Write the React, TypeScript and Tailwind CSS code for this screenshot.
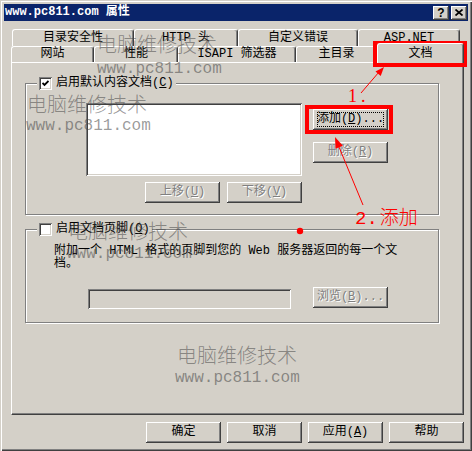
import React from "react";

// classic win32 bevels
const raised =
  "shadow-[inset_-1px_-1px_0_#404040,inset_1px_1px_0_#ffffff,inset_-2px_-2px_0_#808080,inset_2px_2px_0_#d4d0c8]";
const sunken =
  "shadow-[inset_1px_1px_0_#808080,inset_-1px_-1px_0_#ffffff,inset_2px_2px_0_#404040,inset_-2px_-2px_0_#d4d0c8]";
const grayed = "text-[#808080] [text-shadow:1px_1px_0_#ffffff]";

function Btn({
  label,
  disabled = false,
  focused = false,
}: {
  label: React.ReactNode;
  disabled?: boolean;
  focused?: boolean;
}) {
  return (
    <div
      className={`relative flex h-[21px] w-[75px] shrink-0 items-center justify-center bg-[#d4d0c8] ${raised}`}
    >
      {focused && (
        <div className="absolute inset-x-[4px] inset-y-[3px] border border-dotted border-black" />
      )}
      <span className={disabled ? grayed : "text-black"}>{label}</span>
    </div>
  );
}

function Check({ checked }: { checked: boolean }) {
  return (
    <div
      className={`flex h-[13px] w-[13px] shrink-0 items-center justify-center bg-white ${sunken}`}
    >
      {checked && (
        <svg width="7" height="7" viewBox="0 0 7 7">
          <path d="M0.5 3 L2.5 5 L6.5 1" fill="none" stroke="#000" strokeWidth="1.8" />
        </svg>
      )}
    </div>
  );
}

function Group({
  legend,
  checked,
  height,
  children,
}: {
  legend: React.ReactNode;
  checked: boolean;
  height: string;
  children: React.ReactNode;
}) {
  return (
    <div
      className={`w-[414px] ${height} border border-[#808080] shadow-[1px_1px_0_#ffffff,inset_1px_1px_0_#ffffff]`}
    >
      <div className="-mt-[7px] ml-[11px] flex w-fit items-center gap-[4px] bg-[#d4d0c8] px-[2px]">
        <Check checked={checked} />
        <span>{legend}</span>
      </div>
      {children}
    </div>
  );
}

function Tab({ label, w, selected = false }: { label: string; w: string; selected?: boolean }) {
  return (
    <div
      className={`flex ${w} shrink-0 items-center justify-center rounded-t-[3px] border-l border-t border-r border-l-white border-t-white border-r-[#404040] bg-[#d4d0c8] shadow-[inset_-1px_0_0_#808080] ${
        selected ? "relative z-10 -mt-[3px] h-[20px] pt-[1px]" : "h-full"
      }`}
    >
      {label}
    </div>
  );
}

const backTabs = [
  { label: "目录安全性", w: "w-[122px]" },
  { label: "HTTP 头", w: "w-[104px]" },
  { label: "自定义错误", w: "w-[120px]" },
  { label: "ASP.NET", w: "w-[102px]" },
];

const frontTabs = [
  { label: "网站", w: "w-[83px]" },
  { label: "性能", w: "w-[84px]" },
  { label: "ISAPI 筛选器", w: "w-[118px]" },
  { label: "主目录", w: "w-[81px]" },
];

const marks = [
  { cn: "left-[97px] top-[34px]", url: "left-[97px] top-[61px]" },
  { cn: "left-[27px] top-[94px]", url: "left-[26px] top-[118px]" },
  { cn: "left-[68px] top-[221px]", url: "left-[67px] top-[246px]" },
  { cn: "left-[177px] top-[345px]", url: "left-[175px] top-[370px]" },
];

export default function App() {
  return (
    <div className="relative h-[451px] w-[472px] overflow-hidden whitespace-nowrap bg-[#d4d0c8] px-[4px] pt-[4px] font-['Liberation_Mono','Noto_Sans_CJK_SC',monospace] text-[12px] leading-[13px] text-black shadow-[inset_1px_1px_0_#d4d0c8,inset_2px_2px_0_#ffffff,inset_-1px_-1px_0_#404040,inset_-2px_-2px_0_#808080]">
      {/* title bar */}
      <div className="flex h-[17px] items-center justify-between bg-[#0a246a] pl-[1px] pr-[1px]">
        <span className="font-bold text-white">www.pc811.com 属性</span>
        <div className="flex items-center gap-[2px]">
          <div className={`flex h-[14px] w-[16px] items-center justify-center bg-[#d4d0c8] ${raised}`}>
            <span className="font-['Liberation_Sans',sans-serif] text-[12px] font-bold leading-none">?</span>
          </div>
          <div className={`flex h-[14px] w-[16px] items-center justify-center bg-[#d4d0c8] ${raised}`}>
            <svg width="8" height="7" viewBox="0 0 8 7">
              <path d="M0.5 0.5 L7.5 6.5 M7.5 0.5 L0.5 6.5" stroke="#000" strokeWidth="1.7" />
            </svg>
          </div>
        </div>
      </div>

      <div className="pl-[7px] pr-[4px]">
        {/* tabs */}
        <div className="ml-[1px] mt-[8px] flex h-[17px]">
          {backTabs.map((t) => (
            <Tab key={t.label} label={t.label} w={t.w} />
          ))}
        </div>
        <div className="flex h-[16px] items-start">
          {frontTabs.map((t) => (
            <Tab key={t.label} label={t.label} w={t.w} />
          ))}
          <Tab label="文档" w="w-[87px]" selected />
        </div>

        {/* panel */}
        <div className="h-[353px] border border-l-white border-t-white border-r-[#404040] border-b-[#404040] pl-[13px] pt-[20px] shadow-[inset_-1px_-1px_0_#808080]">
          <Group legend={<>启用默认内容文档(<u>C</u>)</>} checked height="h-[132px]">
            <div className="ml-[60px] mt-[13px] flex">
              <div className="flex flex-col">
                <div className={`h-[73px] w-[216px] bg-white ${sunken}`} />
                <div className="mt-[6px] flex justify-end gap-[7px]">
                  <Btn label={<>上移(<u>U</u>)</>} disabled />
                  <Btn label={<>下移(<u>V</u>)</>} disabled />
                </div>
              </div>
              <div className="ml-[11px] mt-[6px] flex flex-col gap-[12px]">
                <Btn label={<>添加(<u>D</u>)...</>} focused />
                <Btn label={<>删除(<u>R</u>)</>} disabled />
              </div>
            </div>
          </Group>

          <div className="mt-[14px]">
            <Group legend={<>启用文档页脚(<u>O</u>)</>} checked={false} height="h-[94px]">
              <div className="ml-[28px] mt-[9px]">
                <div>附加一个 HTML 格式的页脚到您的 Web 服务器返回的每一个文</div>
                <div>档。</div>
              </div>
              <div className="mt-[16px] flex items-start">
                <div className={`ml-[62px] mt-[2px] h-[20px] w-[203px] bg-[#d4d0c8] ${sunken}`} />
                <div className="ml-[22px]">
                  <Btn label={<>浏览(<u>B</u>)...</>} disabled />
                </div>
              </div>
            </Group>
          </div>
        </div>

        {/* dialog buttons */}
        <div className="mt-[7px] flex justify-end gap-[6px]">
          <Btn label="确定" />
          <Btn label="取消" />
          <Btn label={<>应用(<u>A</u>)</>} />
          <Btn label="帮助" />
        </div>
      </div>

      {/* watermarks */}
      {marks.map((m, i) => (
        <React.Fragment key={i}>
          <div
            className={`pointer-events-none absolute ${m.cn} font-['Noto_Sans_CJK_SC',sans-serif] text-[20px] font-light leading-none text-[rgba(70,70,70,0.55)]`}
          >
            电脑维修技术
          </div>
          <div
            className={`pointer-events-none absolute ${m.url} font-['Liberation_Mono',monospace] text-[16px] leading-none text-[rgba(70,70,70,0.55)]`}
          >
            www.pc811.com
          </div>
        </React.Fragment>
      ))}

      {/* red annotations */}
      <svg className="pointer-events-none absolute left-0 top-0" width="472" height="451">
        <rect x="375" y="43" width="90" height="22" fill="none" stroke="#ff0000" strokeWidth="4" />
        <rect x="307" y="107" width="84" height="25" fill="none" stroke="#ff0000" strokeWidth="4" />
        <line x1="361" y1="93" x2="379" y2="72" stroke="#ff0000" strokeWidth="1" />
        <polygon points="384,67 380.7,76.1 375.5,71.5" fill="#ff0000" />
        <line x1="363" y1="205" x2="339" y2="147" stroke="#ff0000" strokeWidth="1" />
        <polygon points="335,137 342.9,145.7 335.5,148.7" fill="#ff0000" />
        <circle cx="300" cy="231" r="3.2" fill="#ff0000" />
      </svg>
      <div className="pointer-events-none absolute left-[348px] top-[87px] font-['Liberation_Serif',serif] text-[18px] leading-none tracking-[4px] text-[#ff0000]">
        1.
      </div>
      <div className="pointer-events-none absolute left-[355px] top-[206px] flex items-baseline text-[19px] leading-none text-[#ff0000]">
        <span className="font-['Liberation_Mono',monospace]">2.</span>
        <span className="ml-[2px] font-['Noto_Sans_CJK_SC',sans-serif] font-light">添加</span>
      </div>
    </div>
  );
}
